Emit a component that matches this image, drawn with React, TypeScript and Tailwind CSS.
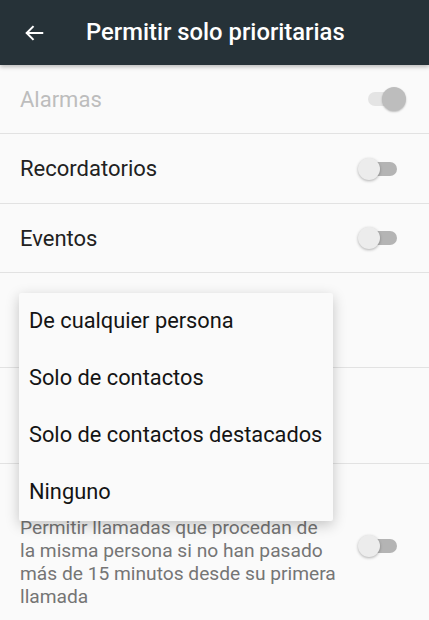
import React from 'react';

type ToggleProps = { on?: boolean };

// Android-style switch, drawn with plain divs
const Toggle: React.FC<ToggleProps> = ({ on = false }) => {
  if (on) {
    return (
      <div className="relative w-[48px] h-[24px] shrink-0">
        <div className="absolute left-[10px] top-[5px] w-[34px] h-[14px] rounded-full bg-[#e4e4e4]" />
        <div className="absolute left-[24px] top-0 w-[24px] h-[24px] rounded-full bg-[#bdbdbd] shadow-[0_1px_2px_rgba(0,0,0,0.25)]" />
      </div>
    );
  }
  return (
    <div className="relative w-[48px] h-[24px] shrink-0">
      <div className="absolute left-[3px] top-[5px] w-[36px] h-[14px] rounded-full bg-[#b4b4b4]" />
      <div className="absolute left-0 top-[1px] w-[22px] h-[22px] rounded-full bg-[#ececec] shadow-[0_1px_3px_rgba(0,0,0,0.3)]" />
    </div>
  );
};

const menuItems = [
  'De cualquier persona',
  'Solo de contactos',
  'Solo de contactos destacados',
  'Ninguno',
];

export default function App() {
  return (
    <div className="relative w-[429px] h-[620px] overflow-hidden bg-[#fafafa] font-['Roboto',sans-serif]">
      {/* toolbar */}
      <header className="relative z-10 h-[65px] bg-[#263238] flex items-center shadow-[0_2px_4px_rgba(0,0,0,0.25)]">
        <div className="w-[86px] flex items-center pl-[23px]">
          <svg width="22" height="22" viewBox="0 0 24 24" fill="none" stroke="#ffffff" strokeWidth="2.2" strokeLinecap="square">
            <path d="M21 12H4.5" />
            <path d="M11.5 4.5L4 12l7.5 7.5" strokeLinecap="butt" />
          </svg>
        </div>
        <h1 className="text-white text-[23.8px] font-medium">Permitir solo prioritarias</h1>
      </header>

      <div className="flex flex-col">
        <div className="h-[69px] flex items-center justify-between pl-[20px] pr-[23px] border-b border-[#e2e2e2]">
          <span className="text-[22px] text-[#bdbdbd]">Alarmas</span>
          <Toggle on />
        </div>
        <div className="h-[70px] flex items-center justify-between pl-[20px] pr-[23px] border-b border-[#e2e2e2]">
          <span className="text-[22px] text-[#212121]">Recordatorios</span>
          <Toggle />
        </div>
        <div className="h-[69px] flex items-center justify-between pl-[20px] pr-[23px] border-b border-[#e2e2e2]">
          <span className="text-[22px] text-[#212121]">Eventos</span>
          <Toggle />
        </div>
        {/* rows covered by the popup menu */}
        <div className="h-[95px] border-b border-[#e2e2e2]" />
        <div className="h-[96px] border-b border-[#e2e2e2]" />
        <div className="flex items-start justify-between pl-[20px] pr-[23px] pt-[52px]">
          <div className="whitespace-nowrap text-[19.2px] leading-[23px] text-[#757575]">
            Permitir llamadas que procedan de
            <br />
            la misma persona si no han pasado
            <br />
            más de 15 minutos desde su primera
            <br />
            llamada
          </div>
          <div className="mt-[18px]">
            <Toggle />
          </div>
        </div>
      </div>

      {/* popup menu */}
      <div className="absolute left-[19px] top-[293px] w-[314px] bg-[#fafafa] rounded-[2px] shadow-[0_4px_14px_rgba(0,0,0,0.22)] z-20">
        {menuItems.map((item) => (
          <div key={item} className="h-[57px] flex items-center pl-[10px] text-[21.8px] text-[#141414]">
            {item}
          </div>
        ))}
      </div>
    </div>
  );
}
